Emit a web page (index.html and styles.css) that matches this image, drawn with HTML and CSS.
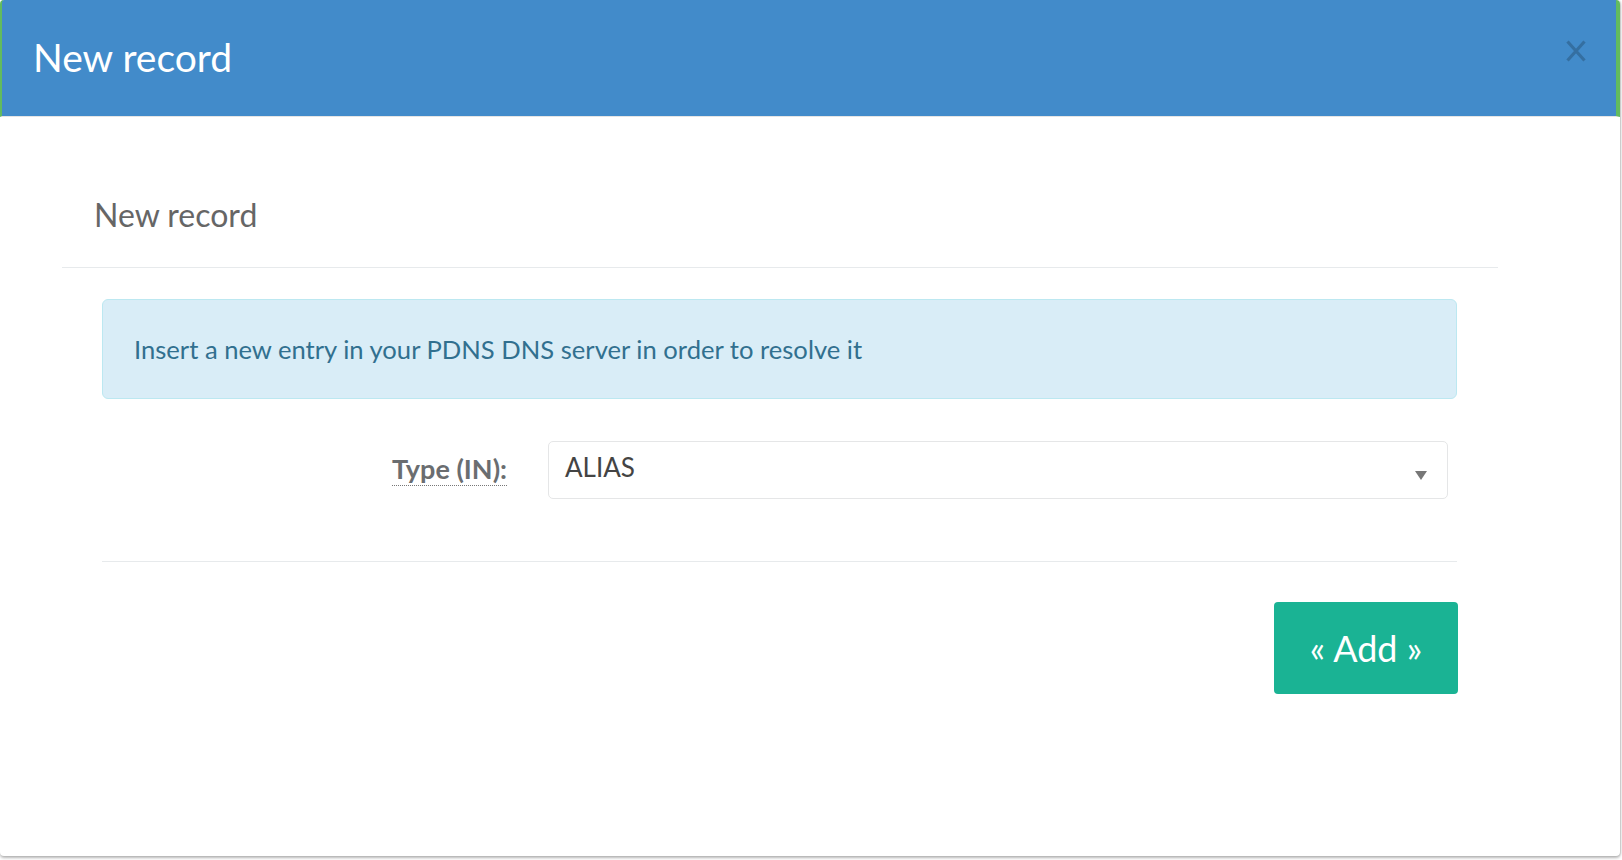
FILE: index.html
```html
<!DOCTYPE html>
<html>
<head>
<meta charset="utf-8">
<link rel="stylesheet" href="styles.css">
</head>
<body>
<div class="modal">
  <div class="modal-header">
    <h4 class="modal-title">New record</h4>
    <button class="close" type="button" aria-label="Close">
      <svg width="20" height="22" viewBox="0 0 20 22"><path d="M1.5 1.5 L18.5 20.5 M18.5 1.5 L1.5 20.5" stroke="currentColor" stroke-width="3.2" fill="none"/></svg>
    </button>
  </div>
  <div class="modal-body">
    <div class="panel">
      <div class="panel-heading">New record</div>
      <div class="panel-content">
        <div class="alert">Insert a new entry in your PDNS DNS server in order to resolve it</div>
        <div class="form-row">
          <label class="form-label"><abbr title="Type">Type (IN):</abbr></label>
          <div class="select">
            <span class="select-value">ALIAS</span>
            <span class="select-arrow"></span>
          </div>
        </div>
        <div class="divider"></div>
        <div class="actions">
          <button class="btn-add" type="button">« Add »</button>
        </div>
      </div>
    </div>
  </div>
</div>
</body>
</html>
```
FILE: styles.css
```css
html, body {
  margin: 0;
  padding: 0;
  background: #ffffff;
}
body {
  font-family: Lato, "Open Sans", "Liberation Sans", sans-serif;
  color: #676a6c;
  width: 1622px;
  height: 860px;
  overflow: hidden;
}
.modal {
  width: 1620px;
  height: 856px;
  background: #fff;
  border-radius: 4px;
  box-shadow: 0 2px 3px rgba(0,0,0,0.28), 1px 0 2px rgba(0,0,0,0.15);
  display: flex;
  flex-direction: column;
}
.modal-header {
  box-sizing: border-box;
  height: 117px;
  background: #428bca;
  border-left: 2px solid #62bb5e;
  border-right: 4px solid #62bb5e;
  border-bottom: 1px solid #e5e5e5;
  border-radius: 4px 4px 0 0;
  padding: 34px 0 0 31px;
  display: flex;
  justify-content: space-between;
  align-items: flex-start;
}
.modal-title {
  margin: 0;
  font-size: 39px;
  font-weight: 400;
  line-height: 47px;
  color: #fff;
}
.close {
  background: none;
  border: 0;
  padding: 0;
  margin: 6px 30px 0 0;
  color: rgba(0,0,0,0.2);
  display: flex;
}
.modal-body {
  padding: 0 0 0 62px;
}
.panel {
  width: 1436px;
}
.panel-heading {
  padding: 79px 0 33px 32px;
  font-size: 32px;
  line-height: 38px;
  color: #666;
  border-bottom: 1px solid #e7eaec;
}
.panel-content {
  padding: 31px 41px 0 40px;
}
.alert {
  box-sizing: border-box;
  height: 100px;
  background: #d9edf7;
  border: 1px solid #bce8f1;
  border-radius: 6px;
  color: #31708f;
  font-size: 25.6px;
  line-height: 31px;
  padding: 0 0 0 31px;
  display: flex;
  align-items: center;
}
.form-row {
  margin-top: 42px;
  display: flex;
  align-items: flex-start;
}
.form-label {
  width: 405px;
  text-align: right;
  padding-top: 12px;
  font-size: 27px;
  font-weight: 700;
  line-height: 32px;
  color: #6a6d70;
}
.form-label abbr {
  text-decoration: none;
  border-bottom: 1px dotted #777;
  cursor: help;
}
.select {
  box-sizing: border-box;
  margin-left: 41px;
  width: 900px;
  height: 58px;
  border: 1px solid #e5e6e7;
  border-radius: 5px;
  padding: 10px 20px 0 16px;
  display: flex;
  justify-content: space-between;
  align-items: flex-start;
}
.select-value {
  font-size: 26px;
  line-height: 31px;
  color: #444;
}
.select-arrow {
  margin-top: 19px;
  width: 0;
  height: 0;
  border-left: 6.5px solid transparent;
  border-right: 6.5px solid transparent;
  border-top: 9px solid #777;
}
.divider {
  margin-top: 62px;
  border-top: 1px solid #e7eaec;
}
.actions {
  margin-top: 40px;
  display: flex;
  justify-content: flex-end;
  margin-right: -1px;
}
.btn-add {
  width: 184px;
  height: 92px;
  border: 0;
  border-radius: 4px;
  background: #1ab394;
  color: #fff;
  font-family: Lato, "Open Sans", "Liberation Sans", sans-serif;
  font-size: 36px;
  line-height: 43px;
  padding: 0;
}
```
